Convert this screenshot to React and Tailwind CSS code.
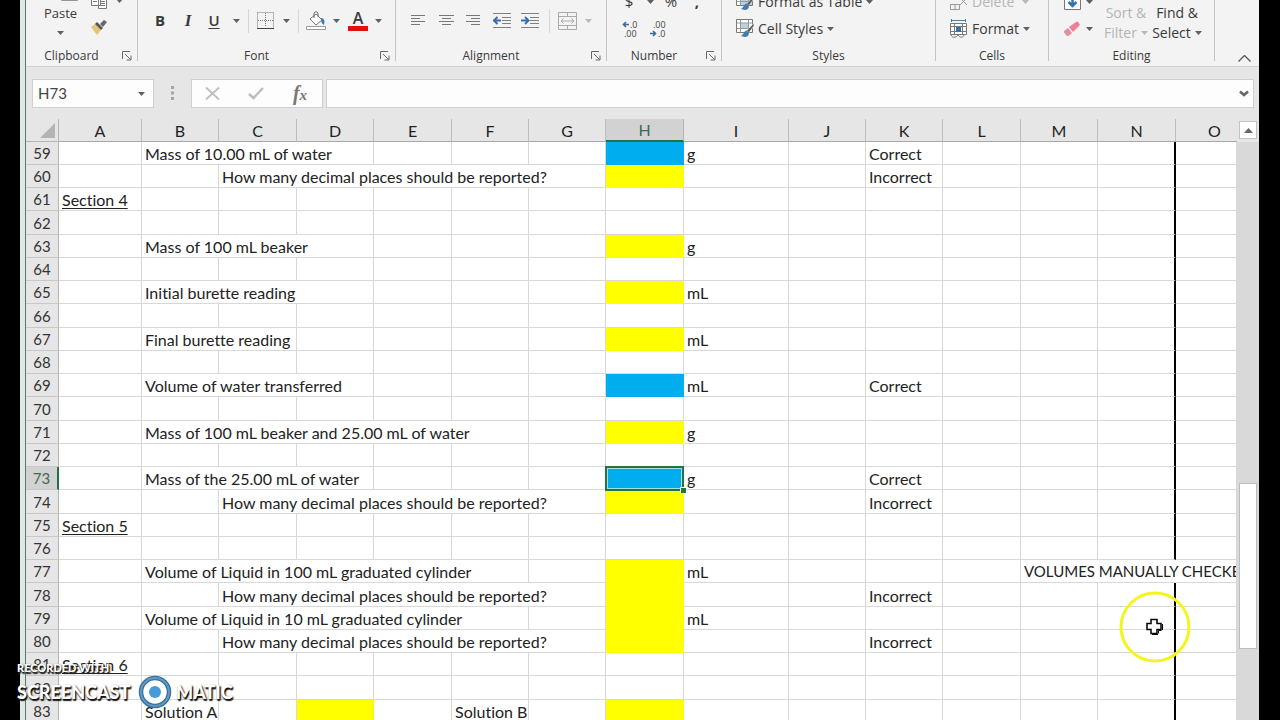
import React from "react";

const COLUMNS = [
  ["A", "w-[83px]"],
  ["B", "w-[77px]"],
  ["C", "w-[78px]"],
  ["D", "w-[77px]"],
  ["E", "w-[78px]"],
  ["F", "w-[77px]"],
  ["G", "w-[77px]"],
  ["H", "w-[78px]"],
  ["I", "w-[105px]"],
  ["J", "w-[77px]"],
  ["K", "w-[77px]"],
  ["L", "w-[78px]"],
  ["M", "w-[77px]"],
  ["N", "w-[78px]"],
  ["O", ""],
];

const BLUE = { fill: "blue" };
const YELLOW = { fill: "yellow" };
const t = (text, span = 1) => ({ text, span });
const DECIMALS = t("How many decimal places should be reported?", 5);

const SHEET = {
  59: { B: t("Mass of 10.00 mL of water", 3), H: BLUE, I: t("g"), K: t("Correct") },
  60: { C: DECIMALS, H: YELLOW, K: t("Incorrect") },
  61: { A: { text: "Section 4", underline: true } },
  63: { B: t("Mass of 100 mL beaker", 3), H: YELLOW, I: t("g") },
  65: { B: t("Initial burette reading", 3), H: YELLOW, I: t("mL") },
  67: { B: t("Final burette reading", 2), H: YELLOW, I: t("mL") },
  69: { B: t("Volume of water transferred", 3), H: BLUE, I: t("mL"), K: t("Correct") },
  71: { B: t("Mass of 100 mL beaker and 25.00 mL of water", 5), H: YELLOW, I: t("g") },
  73: { B: t("Mass of the 25.00 mL of water", 3), H: { fill: "blue", selected: true }, I: t("g"), K: t("Correct") },
  74: { C: DECIMALS, H: YELLOW, K: t("Incorrect") },
  75: { A: { text: "Section 5", underline: true } },
  77: { B: t("Volume of Liquid in 100 mL graduated cylinder", 5), H: YELLOW, I: t("mL"), M: { text: "VOLUMES MANUALLY CHECKED", span: 3, small: true } },
  78: { C: DECIMALS, H: YELLOW, K: t("Incorrect") },
  79: { B: t("Volume of Liquid in 10 mL graduated cylinder", 5), H: YELLOW, I: t("mL") },
  80: { C: DECIMALS, H: YELLOW, K: t("Incorrect") },
  81: { A: { text: "Section 6", underline: true } },
  83: { B: t("Solution A"), D: YELLOW, F: t("Solution B"), H: YELLOW },
};

const ROWS = Array.from({ length: 25 }, (_, i) => 59 + i);

const FILLS = {
  blue: "bg-[#00adee] border-[#00adee]",
  yellow: "bg-[#ffff00] border-[#ffff00]",
};

function Caret({ muted }) {
  return (
    <svg width="7" height="4" viewBox="0 0 7 4" className={muted ? "fill-[#b8b8b8]" : "fill-[#606060]"} aria-hidden="true">
      <path d="M0 0h7L3.5 4z" />
    </svg>
  );
}

function Tool({ label, className, children }) {
  return (
    <button type="button" aria-label={label} className={`flex h-[27px] shrink-0 items-center justify-center ${className}`}>
      {children}
    </button>
  );
}

function Rule({ className }) {
  return (
    <span className={`flex shrink-0 justify-center ${className}`}>
      <span className="h-6 w-px bg-[#d5d5d5]" />
    </span>
  );
}

function Group({ title, className, launcher, children }) {
  return (
    <section aria-label={title} className={`flex shrink-0 items-start ${className}`}>
      <div className="flex min-w-0 flex-1 flex-col">
        <div className="flex h-12 items-end overflow-hidden">{children}</div>
        <div className="flex h-4 items-center text-[12px] leading-[18px]">
          <h2 className="flex-1 text-center">{title}</h2>
          {launcher && (
            <button type="button" aria-label={`${title} settings`} className="flex w-5 justify-center">
              <svg width="10" height="10" viewBox="0 0 10 10" fill="none" stroke="#686868" aria-hidden="true">
                <path d="M.5 8V.5H8M3 3l5.500 5.500M9 4.500V9H4.500" />
              </svg>
            </button>
          )}
        </div>
      </div>
      <span className="h-[61px] w-px bg-[#c3c3c3]" />
    </section>
  );
}

function BrushTable({ tall }) {
  return (
    <svg width="18" height="19" viewBox="0 0 18 19" fill="none" aria-hidden="true">
      <path d="M.5.500h16v13H.5z" fill="#fff" stroke="#777" />
      <path d={tall ? "M5 4h11v9H5z" : "M5 4h8v6H5z"} fill="#b9d0e4" />
      <path d="M.5 4h16M4.500.500v13M.5 9.500h16M12.500.500v13" stroke="#999" />
      <path d="M17.500 4.500 11 11.500l2 2 5-7z" fill="#555" stroke="#f3f3f3" strokeWidth=".5" />
      <path d="M11 11.500c-3-.5-3 4.500-6 5 3 2.500 8 2 8-3z" fill="#447bb1" />
    </svg>
  );
}

function Lines({ kind }) {
  const d = {
    left: "M0 .5h14M0 3.500h9M0 6.500h14M0 9.500h9",
    center: "M0 .5h15M3 3.500h9M0 6.500h15M3 9.500h9",
    right: "M0 .5h14M5 3.500h9M0 6.500h14M5 9.500h9",
  }[kind];
  return (
    <svg width="15" height="11" viewBox="0 0 15 11" stroke="#777" aria-hidden="true">
      <path d={d} />
    </svg>
  );
}

function Indent({ flip }) {
  return (
    <svg width="18" height="16" viewBox="0 0 18 16" fill="none" aria-hidden="true">
      <path d="M0 .5h18M9 4.500h9M9 7.500h9M9 10.500h9M0 14.500h18" stroke="#808080" />
      <path d={flip ? "M0 7.500h7M4 4l3.500 3.500L4 11" : "M8 7.500H1M4.500 4 1 7.500 4.500 11"} stroke="#3c6cab" strokeWidth="2" />
    </svg>
  );
}

function Decimal({ label, className, increase }) {
  return (
    <Tool label={label} className={className}>
      <svg width="17" height="18" viewBox="0 0 17 18" fill="none" aria-hidden="true">
        <path d={increase ? "M7 4.500H1.500M4 2 1.500 4.500 4 7" : "M1 13.500h5.500M4 11l2.500 2.500L4 16"} stroke="#3d6998" strokeWidth="1.600" />
        <g fill="#444" fontFamily="Open Sans, sans-serif" fontSize="9">
          <text x={increase ? 8 : 4} y="8">{increase ? ".0" : ".00"}</text>
          <text x={increase ? 2 : 9} y="17">{increase ? ".00" : ".0"}</text>
        </g>
      </svg>
    </Tool>
  );
}

function Ribbon() {
  return (
    <header className="flex h-[67px] shrink-0 overflow-hidden border-b border-[#d2d2d2] bg-[#f3f3f3] text-[#3a3a3a]">
      <Group title="Clipboard" className="w-[112px]" launcher>
        <button type="button" className="flex w-[69px] flex-col items-center pb-[5px] text-[13px] leading-5">
          <svg width="24" height="26" viewBox="0 0 24 26" className="mb-[2px] ml-6" fill="#fff" stroke="#777" strokeWidth="1.500" aria-hidden="true">
            <path d="M1 1h15v24H1z" />
          </svg>
          Paste
          <span className="flex h-5 items-center"><Caret /></span>
        </button>
        <div className="flex flex-col pb-[7px]">
          <div className="flex">
            <Tool label="Copy" className="w-2">
              <svg width="17" height="18" viewBox="0 0 17 18" fill="#fff" stroke="#777" className="shrink-0" aria-hidden="true">
                <path d="M.5.500h9v13h-9zM7.500 4.500h8v12h-8z" />
                <path d="M9 9.500h5M9 11.500h5M9 13.500h5M2 9.500h4" />
              </svg>
            </Tool>
            <Tool label="Copy options" className="ml-2 w-4"><Caret /></Tool>
          </div>
          <Tool label="Format painter" className="w-2">
            <svg width="16" height="15" viewBox="0 0 16 15" className="shrink-0" aria-hidden="true">
              <path d="M0 7 4 4l6 6-4 5z" fill="#e2c675" />
              <path d="m4 4 2-2 6 6-2 2z" fill="#555" />
              <path d="m9 4 4-4 3 2-4 5z" fill="#666" />
            </svg>
          </Tool>
        </div>
      </Group>

      <Group title="Font" className="w-[258px]" launcher>
        <div className="flex items-center pb-[14px] pl-2 text-[15px]">
          <Tool label="Bold" className="w-7"><b>B</b></Tool>
          <Tool label="Italic" className="w-7"><i className="font-['Liberation_Serif',serif] text-[17px] font-bold">I</i></Tool>
          <Tool label="Underline" className="w-6"><b className="font-semibold underline underline-offset-2">U</b></Tool>
          <Tool label="Underline options" className="w-5"><Caret /></Tool>
          <Rule className="w-1" />
          <Tool label="Borders" className="w-[30px]">
            <svg width="17" height="17" viewBox="0 0 17 17" stroke="#777" fill="none" aria-hidden="true">
              <path d="M.5.500h16v15M.5.500v15M8.500 1v14M1 8.500h15" strokeDasharray="1 1" />
              <path d="M0 16.500h17" stroke="#444" />
            </svg>
          </Tool>
          <Tool label="Border options" className="w-3"><Caret /></Tool>
          <Rule className="w-3" />
          <Tool label="Fill colour" className="w-6">
            <svg width="20" height="20" viewBox="0 0 20 20" fill="none" aria-hidden="true">
              <path d="m4 8 6-5 6 6-6 5z" fill="#fff" stroke="#777" />
              <path d="M8 7V3c0-3 4-3 4 0v3" stroke="#666" />
              <path d="M15 7c3 0 4 3 3 7-2-1-3-3-3-7z" fill="#3d78ad" />
              <path d="M.5 15.500h19v3H.5z" fill="#fff" stroke="#999" />
            </svg>
          </Tool>
          <Tool label="Fill options" className="w-4"><Caret /></Tool>
          <Tool label="Font colour" className="w-7">
            <span className="w-5 border-b-[5px] border-[#e01010] text-center text-[16px] leading-[15px] font-semibold">A</span>
          </Tool>
          <Tool label="Font colour options" className="w-3"><Caret /></Tool>
        </div>
      </Group>

      <Group title="Alignment" className="w-[211px]" launcher>
        <div className="flex items-center pb-[14px] pl-2">
          <Tool label="Align left" className="w-7"><Lines kind="left" /></Tool>
          <Tool label="Center" className="w-7"><Lines kind="center" /></Tool>
          <Tool label="Align right" className="w-[26px]"><Lines kind="right" /></Tool>
          <Tool label="Decrease indent" className="w-8"><Indent /></Tool>
          <Tool label="Increase indent" className="w-6"><Indent flip /></Tool>
          <Rule className="w-[14px]" />
          <Tool label="Merge cells" className="w-[22px]">
            <svg width="19" height="18" viewBox="0 0 19 18" fill="none" stroke="#aaa" aria-hidden="true">
              <path d="M.5.500h18v17H.5zM.5 4.500h18M.5 13.500h18M9.500.500v4M9.500 13.500v4M3 9h13M5.500 6.500 3 9l2.500 2.500M13.500 6.500 16 9l-2.500 2.500" />
            </svg>
          </Tool>
          <Tool label="Merge options" className="w-5"><Caret muted /></Tool>
        </div>
      </Group>

      <Group title="Number" className="w-[115px]" launcher>
        <div className="flex flex-col pb-[6px] pl-2 text-[15px]">
          <div className="flex">
            <Tool label="Currency" className="w-7">$</Tool>
            <Tool label="Currency options" className="w-[14px]"><Caret /></Tool>
            <Tool label="Percent" className="w-7">%</Tool>
            <Tool label="Comma style" className="w-6"><b>,</b></Tool>
          </div>
          <div className="flex">
            <Decimal label="Increase decimal" className="w-[30px]" increase />
            <Decimal label="Decrease decimal" className="w-6" />
          </div>
        </div>
      </Group>

      <Group title="Styles" className="w-[214px]">
        <div className="flex flex-col pb-[6px] pl-[14px] text-[14px]">
          <button type="button" className="flex h-[27px] items-center gap-1">
            <BrushTable tall />Format as Table<Caret />
          </button>
          <button type="button" className="flex h-[27px] items-center gap-1">
            <BrushTable />Cell Styles<Caret />
          </button>
        </div>
      </Group>

      <Group title="Cells" className="w-[113px]">
        <div className="flex flex-col pb-[6px] pl-[14px] text-[14px]">
          <button type="button" className="flex h-[27px] items-center gap-1 text-[#b5b5b5]">
            <svg width="18" height="18" viewBox="0 0 18 18" fill="none" stroke="#999" aria-hidden="true">
              <path d="M.5.500h9v5h-9zM.5 11.500h9v5h-9zM5 11v6M10 5l7 7M17 5l-7 7" />
            </svg>
            Delete<span className="ml-1"><Caret muted /></span>
          </button>
          <button type="button" className="flex h-[27px] items-center gap-1">
            <svg width="18" height="19" viewBox="0 0 18 19" fill="none" stroke="#777" aria-hidden="true">
              <path d="M1 1.500h15M1.500 0v3M15.500 0v3" stroke="#4b7daf" />
              <path d="M.5 4.500h16v11H.5zM.5 7.500h16M.5 12.500h16M4.500 4.500v11M12.500 4.500v11" fill="#fff" />
              <path d="M6 8h5v5H6z" fill="#3d6fa8" stroke="none" />
              <path d="M1 16c1 3 5 3 7 0 2 3 5 3 6 0" />
            </svg>
            Format<Caret />
          </button>
        </div>
      </Group>

      <Group title="Editing" className="w-[166px]">
        <div className="flex flex-col pb-[6px] pl-3">
          <div className="flex">
            <Tool label="Fill" className="w-[22px]">
              <svg width="17" height="17" viewBox="0 0 17 17" fill="none" aria-hidden="true">
                <path d="M.5.500h16v16H.5z" fill="#fff" stroke="#777" />
                <path d="M8.500 3v9M4.500 9l4 4 4-4" stroke="#2f73b5" strokeWidth="2.500" />
              </svg>
            </Tool>
            <Tool label="Fill direction" className="w-3"><Caret /></Tool>
          </div>
          <div className="flex">
            <Tool label="Clear" className="w-[22px]">
              <svg width="16" height="15" viewBox="0 0 16 15" aria-hidden="true">
                <path d="m5 6 7-5q1-1 2 0l1.500 2q.8 1-.5 2l-6 6z" fill="#ec809a" />
                <path d="m4 7 4 5-3.500 3H3L0 11.500V10z" fill="#e58ca1" />
              </svg>
            </Tool>
            <Tool label="Clear options" className="w-3"><Caret /></Tool>
          </div>
        </div>
        <button type="button" className="ml-2 flex w-[46px] shrink-0 flex-col items-center pb-[5px] text-[14px] leading-5 whitespace-nowrap text-[#b5b5b5]">
          <span>Sort &amp;</span>
          <span className="flex items-center gap-1">Filter<Caret muted /></span>
        </button>
        <button type="button" className="ml-[2px] flex w-[52px] shrink-0 flex-col items-center pb-[5px] text-[14px] leading-5 whitespace-nowrap">
          <span>Find &amp;</span>
          <span className="flex items-center gap-1">Select<Caret /></span>
        </button>
      </Group>

      <div className="flex flex-1 items-end justify-end pr-2 pb-1">
        <button type="button" aria-label="Collapse ribbon">
          <svg width="13" height="7" viewBox="0 0 13 7" fill="none" stroke="#555" strokeWidth="1.300" aria-hidden="true">
            <path d="m.5 6.500 6-6 6 6" />
          </svg>
        </button>
      </div>
    </header>
  );
}

function FormulaBar() {
  return (
    <div className="flex h-[52px] shrink-0 items-start bg-[#e6e6e6] pt-3 pr-[5px] pl-[6px]">
      <div className="flex h-[29px] w-[122px] shrink-0 items-center border border-[#cfcfcf] bg-[#fdfdfd] pr-2">
        <input aria-label="Name box" defaultValue="H73" className="w-full min-w-0 bg-transparent pl-[5px] font-[Lato,sans-serif] text-[15px] text-[#444] outline-none" />
        <button type="button" aria-label="Named ranges"><Caret /></button>
      </div>
      <svg width="37" height="29" viewBox="0 0 37 29" className="shrink-0 fill-[#a5a5a5]" aria-hidden="true">
        <path d="M17 7h3v3h-3zM17 12.500h3v3h-3zM17 18h3v3h-3z" />
      </svg>
      <div className="flex h-[29px] w-[132px] shrink-0 items-center border border-[#cfcfcf] bg-[#fdfdfd]">
        <button type="button" aria-label="Cancel" className="flex w-10 justify-center">
          <svg width="15" height="13" viewBox="0 0 15 13" stroke="#bdbdbd" strokeWidth="1.800" aria-hidden="true">
            <path d="m1 .5 13 12M14 .5l-13 12" />
          </svg>
        </button>
        <button type="button" aria-label="Enter" className="flex w-12 justify-center">
          <svg width="16" height="13" viewBox="0 0 16 13" fill="none" stroke="#bdbdbd" strokeWidth="2.500" aria-hidden="true">
            <path d="m1 7 4.500 4L15 1" />
          </svg>
        </button>
        <button type="button" aria-label="Insert function" className="w-10 text-center font-['Liberation_Serif',serif] text-[20px] leading-6 font-bold text-[#777] italic">
          f<span className="text-[15px]">x</span>
        </button>
      </div>
      <div className="ml-[3px] flex h-[29px] min-w-0 flex-1 items-center border border-[#cfcfcf] bg-[#fdfdfd] pr-1">
        <input aria-label="Formula" className="min-w-0 flex-1 bg-transparent px-2 outline-none" />
        <button type="button" aria-label="Expand formula bar">
          <svg width="10" height="7" viewBox="0 0 10 7" fill="none" stroke="#666" strokeWidth="2.500" aria-hidden="true">
            <path d="m1 1.500 4 3.500 4-3.500" />
          </svg>
        </button>
      </div>
    </div>
  );
}

function SheetCells({ row }) {
  const data = SHEET[row] || {};
  const cells = [];
  for (let i = 0; i < COLUMNS.length; ) {
    const name = COLUMNS[i][0];
    const cell = data[name] || {};
    const span = cell.span || 1;
    const fill = cell.fill ? FILLS[cell.fill] : "border-[#d8d8d8]";
    const edge = name === "N" ? "border-r-2 border-r-black" : "border-r";
    cells.push(
      <td key={name} colSpan={span} className={`border-b px-0 pt-px pb-0 pl-[3px] ${edge} ${fill} ${cell.small ? "text-[15px]" : "text-[16px]"} ${cell.selected ? "relative" : "overflow-hidden"}`}>
        {cell.underline ? <span className="underline underline-offset-2">{cell.text}</span> : cell.text}
        {cell.selected && (
          <span className="absolute -inset-x-px -top-px -bottom-[2px] border-2 border-[#217346] shadow-[inset_0_0_0_1px_#a6dfdc]">
            <span className="absolute -right-[4px] -bottom-[4px] size-[6px] border-t border-l border-white bg-[#217346]" />
          </span>
        )}
      </td>
    );
    i += span;
  }
  return cells;
}

function Grid() {
  return (
    <table className="w-full table-fixed border-separate border-spacing-0 bg-white leading-[21px] whitespace-nowrap text-[#222] [font-variant-ligatures:none]">
      <colgroup>
        <col className="w-[33px]" />
        {COLUMNS.map(([name, width]) => <col key={name} className={width} />)}
      </colgroup>
      <thead>
        <tr className="h-[23px] text-[16px]">
          <th className="border-r border-b border-[#b5b5b5] bg-[#e6e6e6] p-0">
            <button type="button" aria-label="Select all" className="flex w-full justify-end pr-[3px]">
              <svg width="15" height="15" viewBox="0 0 15 15" fill="#b4b4b4" aria-hidden="true"><path d="M15 0v15H0z" /></svg>
            </button>
          </th>
          {COLUMNS.map(([name]) => (
            <th
              key={name}
              scope="col"
              className={
                name === "H"
                  ? "border-r border-b-2 border-r-[#b5b5b5] border-b-[#217346] bg-[#d2d2d2] p-0 font-normal text-[#3f6b50]"
                  : name === "O"
                    ? "border-b border-[#a8a8a8] bg-[#e6e6e6] p-0 pl-4 font-normal"
                    : "border-r border-b border-r-[#bdbdbd] border-b-[#a8a8a8] bg-[#e6e6e6] p-0 font-normal"
              }
            >
              {name}
            </th>
          ))}
        </tr>
      </thead>
      <tbody>
        {ROWS.map((row, i) => (
          <tr key={row} className={i % 4 === 3 ? "h-6" : "h-[23px]"}>
            <th
              scope="row"
              className={
                row === 73
                  ? "border-r-2 border-b border-r-[#217346] border-b-[#c8c8c8] bg-[#d2d2d2] px-0 pt-px pb-0 text-[15px] font-normal text-[#3f6b50]"
                  : "border-r border-b border-r-[#b5b5b5] border-b-[#c8c8c8] bg-[#e6e6e6] px-0 pt-px pb-0 text-[15px] font-normal text-[#333]"
              }
            >
              {row}
            </th>
            <SheetCells row={row} />
          </tr>
        ))}
      </tbody>
    </table>
  );
}

function Scrollbar() {
  return (
    <div className="flex w-[22px] shrink-0 flex-col bg-[#d9d9d9]">
      <div className="flex h-[23px] shrink-0 justify-center bg-[#e6e6e6] pt-[2px]">
        <button type="button" aria-label="Scroll up" className="flex size-[18px] items-center justify-center border border-[#c2c2c2] bg-white">
          <svg width="9" height="5" viewBox="0 0 9 5" fill="#666" aria-hidden="true"><path d="M0 5h9L4.500 0z" /></svg>
        </button>
      </div>
      <div className="flex flex-1 flex-col items-center">
        <div className="grow-[342]" />
        <div className="w-[18px] grow-[165] border border-[#bdbdbd] bg-white" />
        <div className="grow-[71]" />
      </div>
    </div>
  );
}

function Watermark() {
  return (
    <div className="absolute bottom-[11px] left-[17px] font-[Lato,sans-serif] font-black text-white [text-shadow:1px_1px_2px_#000,1px_2px_1px_#333]">
      <div className="text-[11px] leading-[14px]">RECORDED WITH</div>
      <div className="flex h-[34px] items-center text-[18px]">
        <span className="w-[121px]">SCREENCAST</span>
        <svg width="34" height="34" viewBox="0 0 34 34" className="mr-1" aria-hidden="true">
          <circle cx="17" cy="17" r="14" fill="#fff" stroke="#3a6f96" strokeWidth="4.500" />
          <circle cx="17" cy="17" r="14" fill="none" stroke="#5c9cc6" strokeWidth="2" />
          <circle cx="17" cy="17" r="6" fill="#469bd8" />
        </svg>
        <span>MATIC</span>
      </div>
    </div>
  );
}

function Pointer() {
  return (
    <svg width="72" height="72" viewBox="0 0 72 72" fill="none" className="pointer-events-none absolute right-[89px] bottom-[57px]" aria-hidden="true">
      <circle cx="36" cy="36" r="34" stroke="#f5f51e" strokeWidth="3" />
      <path d="M32 28.500h6v4h4v6h-4v4h-6v-4h-4v-6h4z" fill="#fff" stroke="#000" strokeWidth="1.500" />
      <path d="M33 43.500h6M42.500 39.500h-3v3M43.500 33v6" stroke="#000" />
    </svg>
  );
}

export default function App() {
  return (
    <div className="relative flex h-screen overflow-hidden bg-black pr-[21px] pl-5 font-['Open_Sans',sans-serif]">
      <div className="w-[5px] shrink-0 bg-[#e4e6e5]" />
      <main className="flex min-w-0 flex-1 flex-col border-l border-[#4d8068] bg-[#e6e6e6]">
        <Ribbon />
        <FormulaBar />
        <div className="flex min-h-0 flex-1 overflow-hidden font-[Lato,sans-serif]">
          <div className="min-w-0 flex-1 overflow-hidden"><Grid /></div>
          <Scrollbar />
        </div>
      </main>
      <Watermark />
      <Pointer />
    </div>
  );
}
